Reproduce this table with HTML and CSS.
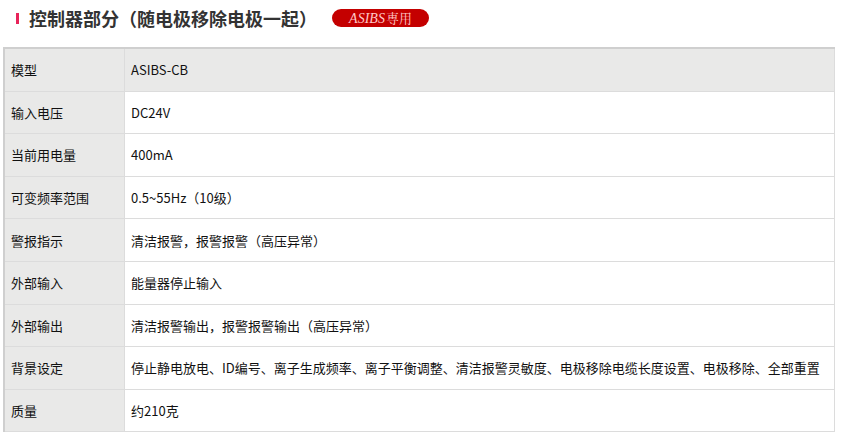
FILE: index.html
```html
<!DOCTYPE html>
<html lang="zh-CN">
<head>
<meta charset="utf-8">
<link rel="stylesheet" href="styles.css">
</head>
<body>
<div class="heading">
  <span class="mark"></span>
  <h2 class="title">控制器部分（随电极移除电极一起）</h2>
  <span class="badge"><i>ASIBS</i>専用</span>
</div>
<table class="spec">
  <tr class="head"><th>模型</th><td>ASIBS-CB</td></tr>
  <tr><th>输入电压</th><td>DC24V</td></tr>
  <tr><th>当前用电量</th><td>400mA</td></tr>
  <tr><th>可变频率范围</th><td>0.5~55Hz（10级）</td></tr>
  <tr><th>警报指示</th><td>清洁报警，报警报警（高压异常）</td></tr>
  <tr><th>外部输入</th><td>能量器停止输入</td></tr>
  <tr><th>外部输出</th><td>清洁报警输出，报警报警输出（高压异常）</td></tr>
  <tr><th>背景设定</th><td>停止静电放电、ID编号、离子生成频率、离子平衡调整、清洁报警灵敏度、电极移除电缆长度设置、电极移除、全部重置</td></tr>
  <tr><th>质量</th><td>约210克</td></tr>
</table>
</body>
</html>
```
FILE: styles.css
```css
html, body {
  margin: 0;
  padding: 0;
  background: #fff;
}
body {
  font-family: "Noto Sans CJK SC", "Noto Sans", sans-serif;
  width: 844px;
  height: 444px;
  overflow: hidden;
}
.heading {
  display: flex;
  align-items: center;
  height: 36px;
  padding-left: 16px;
}
.mark {
  width: 3px;
  height: 11px;
  background: #e8245a;
  margin-right: 10px;
}
.title {
  margin: 0;
  font-size: 18px;
  font-weight: bold;
  color: #333;
  line-height: 36px;
  letter-spacing: 0;
}
.badge {
  margin-left: 15px;
  width: 97px;
  height: 18px;
  border-radius: 9px;
  background: #c40000;
  color: #ffc8c8;
  font-family: "Noto Serif CJK JP", "Liberation Serif", serif;
  font-size: 13px;
  line-height: 18px;
  text-align: center;
}
.badge i {
  font-family: "Liberation Serif", serif;
  font-style: italic;
  font-size: 14px;
  margin-right: 1px;
}
.spec {
  margin: 11px 0 0 3px;
  width: 832px;
  border-collapse: collapse;
  font-size: 13px;
  color: #111;
  border-top: 2px solid #cfcfcf;
  border-left: 2px solid #cfcfcf;
}
.spec th, .spec td {
  height: 41.6px;
  padding: 0;
  border: 1px solid #dcdcdc;
  text-align: left;
  font-weight: normal;
  vertical-align: middle;
}
.spec tr:first-child th, .spec tr:first-child td {
  border-top: 2px solid #cfcfcf;
}
.spec th {
  width: 113px;
  padding-left: 6px;
  background: #e9e9e8;
  border-left: 2px solid #cfcfcf;
}
.spec td {
  padding-left: 6px;
}
.spec tr.head td {
  background: #e9e9e8;
}
```
